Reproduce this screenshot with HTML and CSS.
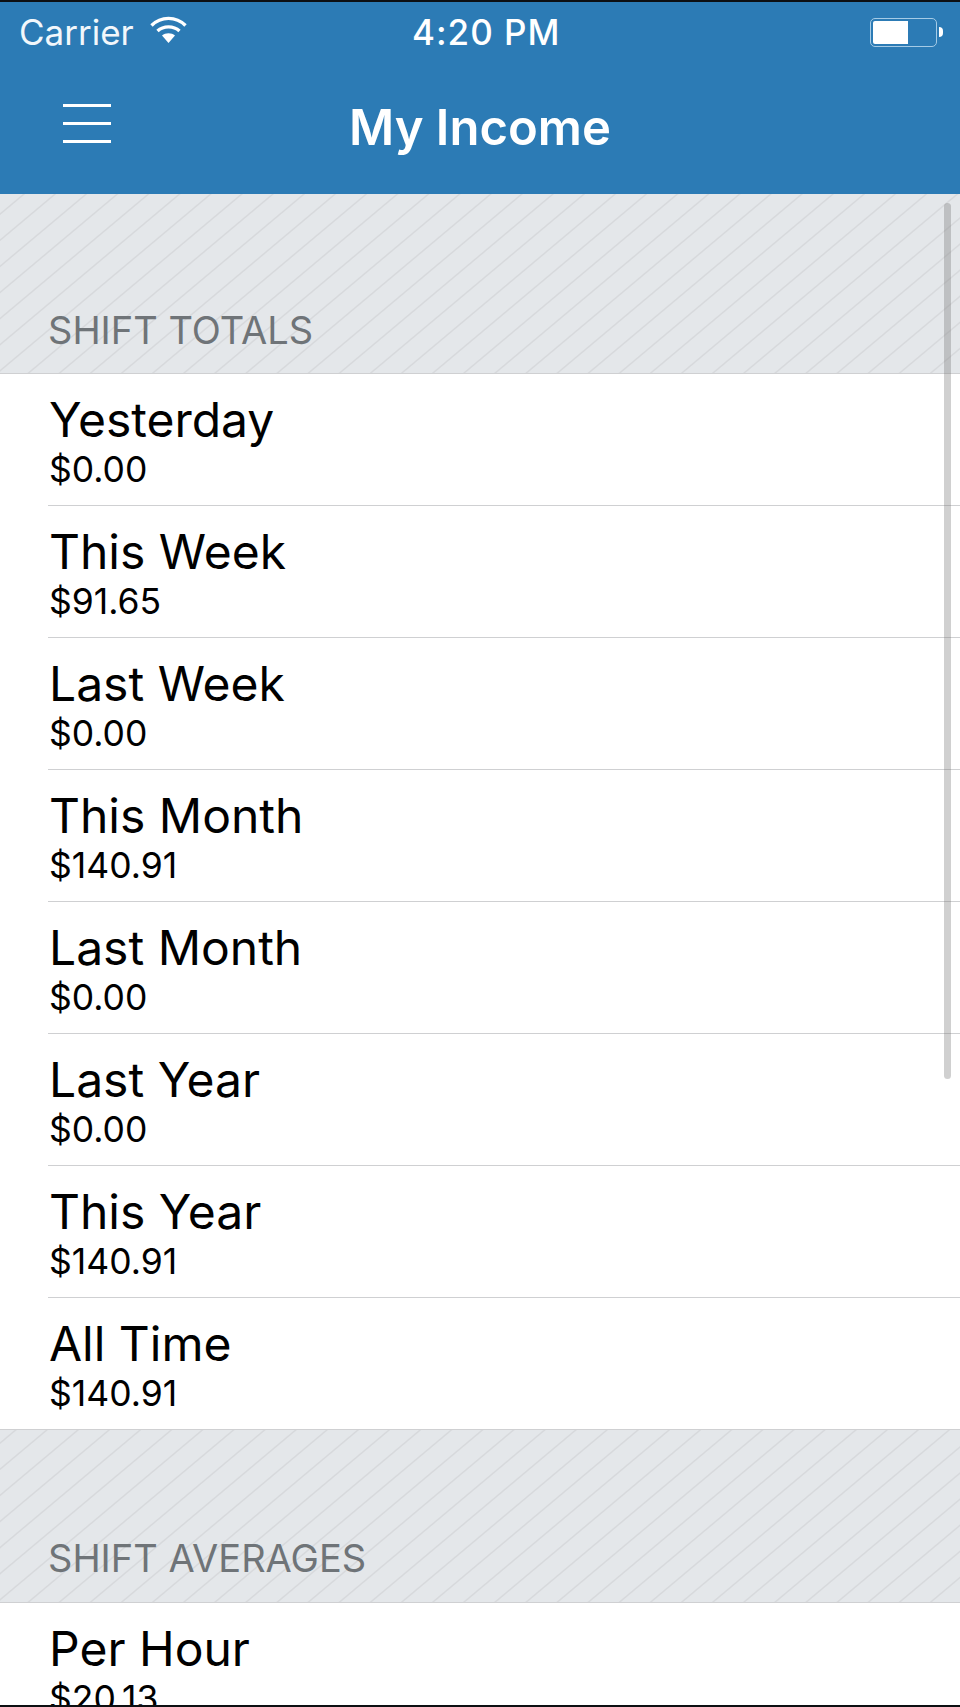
FILE: index.html
```html
<!DOCTYPE html>
<html lang="en">

<head>
    <meta charset="UTF-8">
    <meta name="viewport" content="width=device-width, initial-scale=1.0">
    <title>My Income</title>
    <link rel="stylesheet" href="styles.css">
</head>

<body>
    <div class="phone">
        <header class="header">
            <div class="status-bar">
                <div class="status-left">
                    <span class="carrier">Carrier</span>
                    <svg class="wifi" viewBox="0 0 37 27" width="37" height="27">
                        <path d="M1.5 9.5 C11 0 26 0 35.5 9.5" fill="none" stroke="#fff" stroke-width="3.4"/>
                        <path d="M7.5 15 C13.5 9.5 23.5 9.5 29.5 15" fill="none" stroke="#fff" stroke-width="3.4"/>
                        <path d="M12 19.5 C15.5 16.5 21.5 16.5 25 19.5 L18.5 27 Z" fill="#fff"/>
                    </svg>
                </div>
                <span class="clock">4:20 PM</span>
                <div class="battery">
                    <div class="battery-body">
                        <div class="battery-level"></div>
                    </div>
                    <div class="battery-nub"></div>
                </div>
            </div>
            <div class="nav">
                <button class="menu-btn" aria-label="Menu">
                    <span></span>
                    <span></span>
                    <span></span>
                </button>
                <h1 class="page-title">My Income</h1>
            </div>
        </header>

        <main class="content">
            <div class="scroll-thumb"></div>

            <h2 class="section-title">SHIFT TOTALS</h2>
            <ul class="income-list">
                <li class="income-row"><span class="row-name">Yesterday</span><span class="row-value">$0.00</span></li>
                <li class="income-row"><span class="row-name">This Week</span><span class="row-value">$91.65</span></li>
                <li class="income-row"><span class="row-name">Last Week</span><span class="row-value">$0.00</span></li>
                <li class="income-row"><span class="row-name">This Month</span><span class="row-value">$140.91</span></li>
                <li class="income-row"><span class="row-name">Last Month</span><span class="row-value">$0.00</span></li>
                <li class="income-row"><span class="row-name">Last Year</span><span class="row-value">$0.00</span></li>
                <li class="income-row"><span class="row-name">This Year</span><span class="row-value">$140.91</span></li>
                <li class="income-row"><span class="row-name">All Time</span><span class="row-value">$140.91</span></li>
            </ul>

            <h2 class="section-title section-title-next">SHIFT AVERAGES</h2>
            <ul class="income-list">
                <li class="income-row"><span class="row-name">Per Hour</span><span class="row-value">$20.13</span></li>
            </ul>
        </main>
    </div>
</body>

</html>
```

FILE: styles.css
```css
:root {
    --blue: #2c7bb5;
    --hatch-bg: #e4e7ea;
    --hatch-line: #d7d9dc;
    --border-color: #cfd0d2;
    --section-text: #6f7478;
}

* {
    box-sizing: border-box;
    margin: 0;
    padding: 0;
}

body {
    background-color: #fff;
    font-family: Inter, "Liberation Sans", sans-serif;
}

.phone {
    width: 960px;
    height: 1707px;
    display: flex;
    flex-direction: column;
    overflow: hidden;
    border-top: 2px solid #0d0f12;
    border-bottom: 2px solid #0d0f12;
}

.header {
    background-color: var(--blue);
    color: #fff;
    height: 192px;
    flex-shrink: 0;
}

.status-bar {
    height: 60px;
    padding: 0 17px 0 19px;
    display: flex;
    align-items: center;
    justify-content: space-between;
    position: relative;
}

.status-left {
    display: flex;
    align-items: center;
    gap: 16px;
}

.carrier {
    font-size: 35px;
    color: #f2f7fb;
}

.wifi {
    margin-top: -6px;
}

.clock {
    position: absolute;
    left: 412px;
    font-size: 35px;
    font-weight: 500;
    letter-spacing: 1px;
}

.battery {
    display: flex;
    align-items: center;
}

.battery-body {
    width: 67px;
    height: 29px;
    border: 1px solid #a5cbe6;
    border-radius: 5px;
    padding: 2px;
}

.battery-level {
    width: 35px;
    height: 100%;
    background-color: #fff;
    border-radius: 2px 0 0 2px;
}

.battery-nub {
    width: 4px;
    height: 10px;
    margin-left: 2px;
    background-color: #fff;
    border-radius: 0 4px 4px 0;
}

.nav {
    height: 132px;
    padding: 0 0 9px 63px;
    display: flex;
    align-items: center;
    position: relative;
}

.menu-btn {
    width: 48px;
    background: none;
    border: none;
    display: flex;
    flex-direction: column;
    gap: 15px;
}

.menu-btn span {
    display: block;
    height: 3px;
    background-color: #fff;
}

.page-title {
    position: absolute;
    left: 0;
    right: 0;
    top: 36px;
    text-align: center;
    font-size: 49px;
    font-weight: 600;
}

.content {
    flex: 1;
    min-height: 0;
    position: relative;
}

/* overlay scrollbar */
.scroll-thumb {
    position: absolute;
    top: 9px;
    right: 9px;
    width: 7px;
    height: 876px;
    border-radius: 4px;
    background-color: rgba(120, 120, 120, 0.35);
}

.section-title {
    height: 179px;
    padding: 0 0 20px 48px;
    display: flex;
    align-items: flex-end;
    font-size: 38px;
    font-weight: 400;
    line-height: 46px;
    color: var(--section-text);
    background-color: var(--hatch-bg);
    background-image: repeating-linear-gradient(-40deg, transparent 0, transparent 17.5px, var(--hatch-line) 18.5px, var(--hatch-line) 19px, transparent 20px);
}

.section-title-next {
    height: 172px;
    padding-bottom: 21px;
}

.income-list {
    list-style: none;
    background-color: #fff;
    border-top: 1px solid var(--border-color);
    border-bottom: 1px solid var(--border-color);
}

.income-row {
    height: 132px;
    margin-left: 48px;
    padding: 16px 0 0 1px;
    display: flex;
    flex-direction: column;
    color: #000;
    border-bottom: 1px solid var(--border-color);
}

.income-row:last-child {
    height: 131px;
    border-bottom: none;
}

.row-name {
    font-size: 48px;
    line-height: 59px;
}

.row-value {
    font-size: 35.5px;
    line-height: 42px;
}
```
